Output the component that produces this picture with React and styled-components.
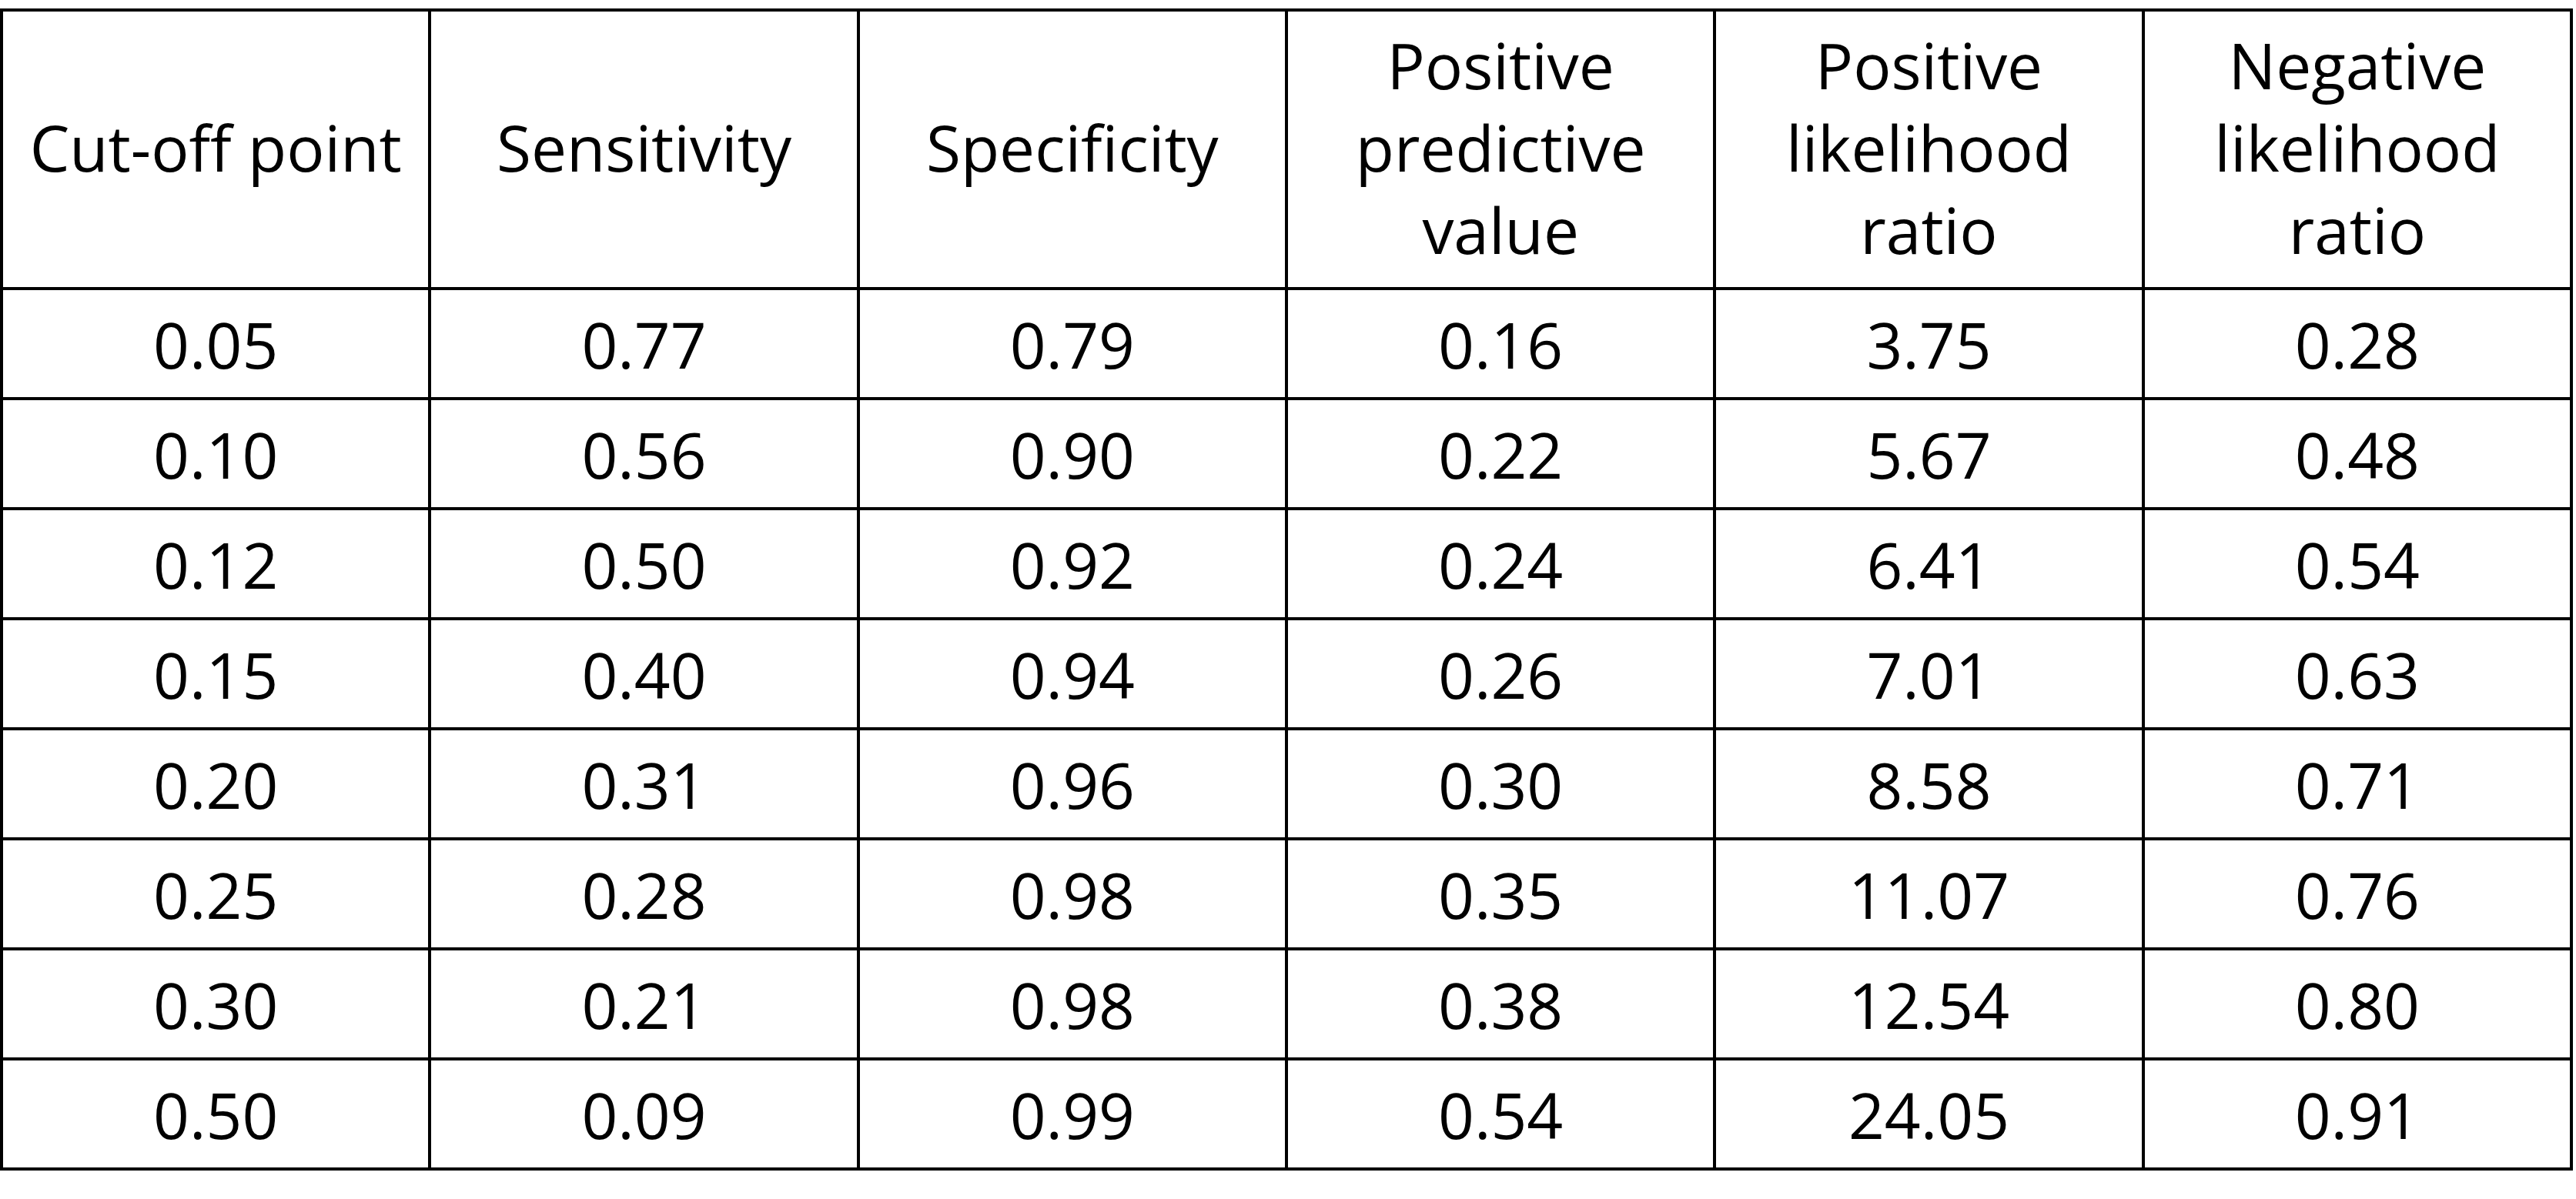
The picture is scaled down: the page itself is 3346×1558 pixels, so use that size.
import React from "react";
import styled, { createGlobalStyle } from "styled-components";

const Global = createGlobalStyle`
  html, body {
    margin: 0;
    padding: 0;
    background: #ffffff;
  }
  body {
    font-family: "Open Sans", "Noto Sans", sans-serif;
    color: #000000;
  }
`;

const Page = styled.div`
  width: 3346px;
  height: 1558px;
  padding-top: 11px;
  box-sizing: border-box;
  background: #ffffff;
`;

const Grid = styled.div`
  width: 3342px;
  display: grid;
  grid-template-columns: repeat(6, 1fr);
  grid-template-rows: 358px repeat(8, 139px);
  gap: 4px;
  padding: 4px;
  box-sizing: border-box;
  background: #000000;
`;

const Cell = styled.div`
  background: #ffffff;
  display: flex;
  align-items: center;
  justify-content: center;
  text-align: center;
  font-family: "Open Sans", "Noto Sans", sans-serif;
  font-size: 82px;
  line-height: 107px;
  color: #000000;
  white-space: pre-line;
  padding-top: ${(p) => (p.$head ? "0" : "2px")};
  padding-bottom: ${(p) => (p.$head ? "5px" : "0")};
`;

const headers = [
  "Cut-off point",
  "Sensitivity",
  "Specificity",
  "Positive\npredictive\nvalue",
  "Positive\nlikelihood\nratio",
  "Negative\nlikelihood\nratio",
];

const rows = [
  ["0.05", "0.77", "0.79", "0.16", "3.75", "0.28"],
  ["0.10", "0.56", "0.90", "0.22", "5.67", "0.48"],
  ["0.12", "0.50", "0.92", "0.24", "6.41", "0.54"],
  ["0.15", "0.40", "0.94", "0.26", "7.01", "0.63"],
  ["0.20", "0.31", "0.96", "0.30", "8.58", "0.71"],
  ["0.25", "0.28", "0.98", "0.35", "11.07", "0.76"],
  ["0.30", "0.21", "0.98", "0.38", "12.54", "0.80"],
  ["0.50", "0.09", "0.99", "0.54", "24.05", "0.91"],
];

export default function App() {
  return (
    <>
      <Global />
      <Page>
        <Grid>
          {headers.map((h, i) => (
            <Cell key={"h" + i} $head>
              {h}
            </Cell>
          ))}
          {rows.map((r, ri) =>
            r.map((v, ci) => <Cell key={ri + "-" + ci}>{v}</Cell>)
          )}
        </Grid>
      </Page>
    </>
  );
}
